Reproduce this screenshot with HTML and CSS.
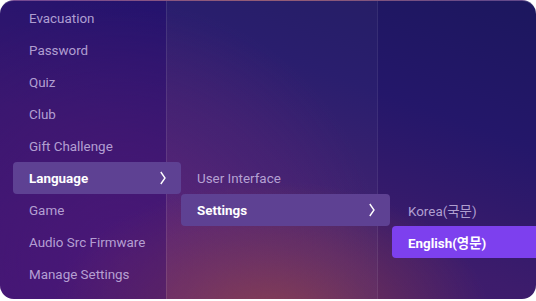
FILE: index.html
```html
<!DOCTYPE html>
<html lang="en">
<head>
    <meta charset="UTF-8">
    <meta name="viewport" content="width=device-width, initial-scale=1.0">
    <title>Menu</title>
    <link rel="stylesheet" href="styles.css">
</head>
<body>
    <div class="panel">
        <div class="column col-main">
            <div class="item">Evacuation</div>
            <div class="item">Password</div>
            <div class="item">Quiz</div>
            <div class="item">Club</div>
            <div class="item">Gift Challenge</div>
            <div class="item active">
                <span>Language</span>
                <svg class="chevron" width="6" height="14" viewBox="0 0 6 14"><polyline points="0.8,1 5,7 0.8,13" fill="none" stroke="#fff" stroke-width="1.4"/></svg>
            </div>
            <div class="item">Game</div>
            <div class="item">Audio Src Firmware</div>
            <div class="item">Manage Settings</div>
        </div>
        <div class="column col-sub">
            <div class="item">User Interface</div>
            <div class="item active">
                <span>Settings</span>
                <svg class="chevron" width="6" height="14" viewBox="0 0 6 14"><polyline points="0.8,1 5,7 0.8,13" fill="none" stroke="#fff" stroke-width="1.4"/></svg>
            </div>
        </div>
        <div class="column col-lang">
            <div class="item">Korea(국문)</div>
            <div class="item selected">English(영문)</div>
        </div>
    </div>
</body>
</html>
```

FILE: styles.css
```css
body { margin: 0; background: #fff; font-family: Roboto, "Noto Sans CJK KR", sans-serif; }
.panel {
    width: 536px; height: 299px; border-radius: 14px; overflow: hidden;
    display: grid; grid-template-columns: 166px 211px 1fr;
    border-top: 1px solid rgba(255, 255, 255, 0.2); box-sizing: border-box;
    background:
        radial-gradient(ellipse 220px 140px at 270px 320px, rgba(140, 62, 72, 0.85), rgba(140, 62, 72, 0) 100%),
        radial-gradient(ellipse 260px 260px at 120px 260px, rgba(92, 30, 120, 0.8), rgba(92, 30, 120, 0) 100%),
        linear-gradient(200deg, #1c175e 0%, #24176a 30%, #3d1c6c 60%, #4a1a74 100%);
}
.column { display: flex; flex-direction: column; min-width: 0; }
.col-main { padding-top: 1px; background: rgba(40, 10, 120, 0.28); }
.col-sub { padding-top: 161px; border-left: 1px solid rgba(255, 255, 255, 0.1); background: rgba(255, 255, 255, 0.03); }
.col-lang { padding-top: 193px; border-left: 1px solid rgba(255, 255, 255, 0.1); }
.item {
    height: 32px; display: flex; align-items: center; justify-content: space-between;
    padding: 0 15px 0 16px; font-size: 13.4px; color: rgba(210, 195, 235, 0.8);
    white-space: nowrap; box-sizing: border-box; border-radius: 4px; position: relative; z-index: 1;
}
.col-main .item { margin-left: 13px; width: 168px; }
.col-sub .item { margin-left: 14px; width: 209px; }
.col-lang .item { margin-left: 14px; width: 160px; }
.item.active { background: #5e4193; color: #fff; font-weight: 700; }
.item.selected { background: #7d40ee; color: #fff; font-weight: 700; }
.chevron { display: block; }
```
